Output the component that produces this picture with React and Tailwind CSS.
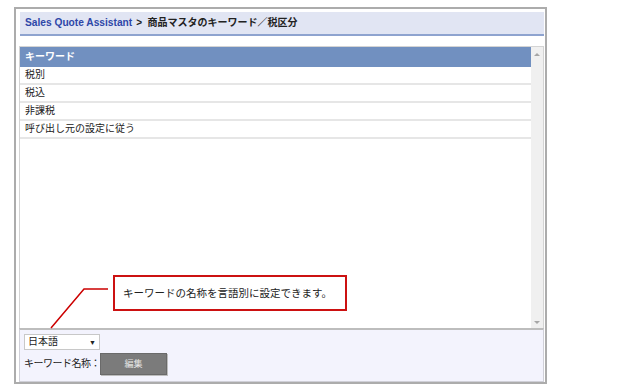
import React from "react";

const font = { fontFamily: '"Liberation Sans", "Noto Sans CJK JP", sans-serif' };

export default function App() {
  const rows = ["税別", "税込", "非課税", "呼び出し元の設定に従う"];
  return (
    <div
      className="relative w-[640px] h-[389px] bg-white overflow-hidden pt-[7px] pl-[14px] text-[#222]"
      style={font}
    >
      <div className="w-[533px] h-[377px] border-2 border-[#acacac] flex flex-col">
        {/* title bar */}
        <div className="ml-[4px] mt-[3px] w-[524px] h-[24px] shrink-0 bg-[#e1e5f3] border-b-2 border-[#8ea3cf] flex items-center pl-[5px] text-[10px] font-bold leading-none whitespace-nowrap">
          <span className="text-[#2e47a8] text-[10.2px]">Sales Quote Assistant</span>
          <span className="ml-[4px] text-[#222]">&gt;&nbsp;&nbsp;商品マスタのキーワード／税区分</span>
        </div>

        {/* list */}
        <div className="ml-[3px] mt-[10px] w-[525px] h-[282px] shrink-0 border-t border-x border-[#d4d4d4] flex">
          <div className="flex-1 flex flex-col">
            <div className="h-[20px] bg-[#7190c0] text-white font-bold text-[10px] flex items-center pl-[5px] leading-none">
              キーワード
            </div>
            {rows.map((r) => (
              <div
                key={r}
                className="h-[18px] border-b-2 border-[#e6e6e6] text-[10px] flex items-center pl-[5px] leading-none text-[#222]"
              >
                {r}
              </div>
            ))}
          </div>
          <div className="w-[12px] bg-[#f0f0f0] flex flex-col items-center justify-between pt-[6px] pb-[4px]">
            <div className="w-0 h-0 border-l-[3px] border-r-[3px] border-b-[3px] border-l-transparent border-r-transparent border-b-[#a6a6a6]" />
            <div className="w-0 h-0 border-l-[3px] border-r-[3px] border-t-[3px] border-l-transparent border-r-transparent border-t-[#a6a6a6]" />
          </div>
        </div>

        {/* footer */}
        <div className="ml-[3px] w-[525px] flex-1 border-t-2 border-t-[#bdbdbd] border-x border-b border-x-[#d0d0d8] border-b-[#d0d0d8] bg-[#f3f3fd] pl-[4px] pt-[4px] flex flex-col">
          <div className="w-[76px] h-[16px] bg-white border border-[#c8c8c8] flex items-center justify-between pl-[3px] pr-[3px] text-[10px] leading-none">
            <span>日本語</span>
            <span className="text-[7px]">▼</span>
          </div>
          <div className="mt-[3px] flex items-center">
            <span className="text-[10px] tracking-[-0.5px] leading-none w-[76px] shrink-0 whitespace-nowrap">キーワード名称：</span>
            <div className="w-[67px] h-[22px] bg-[#7b7b7b] border border-[#6a6a6a] shadow-[1px_1px_0_#bdbdbd] flex items-center justify-center text-[9px] text-[#e6e6e6] leading-none">
              編集
            </div>
          </div>
        </div>
      </div>

      {/* callout line */}
      <svg className="absolute left-0 top-0 pointer-events-none" width="640" height="389">
        <polyline points="108,289 84,289 51,328" fill="none" stroke="#cc0000" strokeWidth="1.5" />
      </svg>

      {/* callout box */}
      <div className="absolute left-[113px] top-[275px] w-[234px] h-[36px] border-2 border-[#cc1111] bg-white flex items-center pl-[8px] text-[10.5px] leading-none text-[#222]">
        キーワードの名称を言語別に設定できます。
      </div>
    </div>
  );
}
